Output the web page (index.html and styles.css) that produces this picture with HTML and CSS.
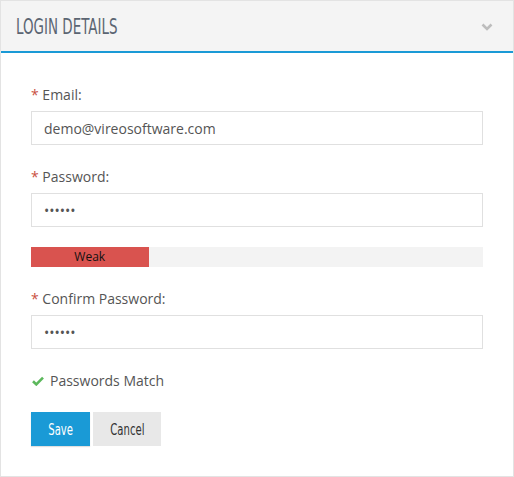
FILE: index.html
```html
<!DOCTYPE html>
<html lang="en">
<head>
  <meta charset="UTF-8">
  <title>Login Details</title>
  <meta name="viewport" content="width=device-width, initial-scale=1.0">
  <link rel="stylesheet" href="styles.css">
</head>
<body>

  <div class="panel">
    <div class="panel-heading">
      <h3 class="panel-title"><span>LOGIN DETAILS</span></h3>
      <svg class="chevron" width="12" height="8" viewBox="0 0 12 8">
        <path d="M1.5 1.5 L6 6 L10.5 1.5" fill="none" stroke="#bdbdbd" stroke-width="2.6"/>
      </svg>
    </div>

    <form class="panel-body">
      <div class="form-group">
        <label for="email"><span class="req">*</span> Email:</label>
        <input type="text" id="email" value="demo@vireosoftware.com">
      </div>

      <div class="form-group">
        <label for="password"><span class="req">*</span> Password:</label>
        <input type="password" id="password" value="123456">
      </div>

      <!-- strength meter -->
      <div class="strength">
        <div class="strength-bar" style="width: 26%">Weak</div>
      </div>

      <div class="form-group">
        <label for="confirm"><span class="req">*</span> Confirm Password:</label>
        <input type="password" id="confirm" value="123456">
      </div>

      <p class="match">
        <svg width="12" height="10" viewBox="0 0 12 10">
          <path d="M1 5.2 L4.3 8.4 L11 1.6" fill="none" stroke="#5cb85c" stroke-width="2.6"/>
        </svg>
        Passwords Match
      </p>

      <div class="actions">
        <button type="button" class="btn btn-primary"><span>Save</span></button>
        <button type="button" class="btn btn-default"><span>Cancel</span></button>
      </div>
    </form>
  </div>

</body>
</html>
```

FILE: styles.css
```css
body {
  margin: 0;
  font-family: "Open Sans", "Liberation Sans", sans-serif;
  font-size: 14px;
  color: #555;
  background: #fff;
}

/* panel */
.panel {
  box-sizing: border-box;
  width: 514px;
  height: 477px;
  border: 1px solid #e3e3e3;
}
.panel-heading {
  display: flex;
  align-items: center;
  justify-content: space-between;
  height: 50px;
  padding: 0 20px 0 15px;
  background: #f4f4f4;
  border-bottom: 2px solid #1a9ad6;
}
.panel-title {
  margin: 0;
  font-family: "Liberation Sans Narrow", "DejaVu Sans Condensed", sans-serif;
  font-weight: normal;
  font-size: 22px;
  color: #5b6572;
}
.panel-title span {
  display: inline-block;
  transform: scaleX(0.68);
  transform-origin: left center;
}
.chevron { margin-top: 2px; }

.panel-body {
  padding: 32px 30px 0 30px;
  margin: 0;
}

/* fields */
.form-group { margin-bottom: 22px; }
label {
  display: block;
  line-height: 20px;
  margin-bottom: 6px;
}
.req { color: #c9503f; }
input {
  display: block;
  box-sizing: border-box;
  width: 100%;
  height: 34px;
  padding: 0 12px;
  border: 1px solid #e0e0e0;
  border-radius: 0;
  font-family: inherit;
  font-size: 14px;
  color: #555;
  outline: none;
}

/* strength meter */
.strength {
  height: 20px;
  margin: -2px 0 22px;
  background: #f3f3f3;
}
.strength-bar {
  height: 20px;
  line-height: 20px;
  text-align: center;
  font-size: 12px;
  color: #111;
  background: #d9534f;
}

.match {
  display: flex;
  align-items: center;
  gap: 6px;
  margin: 0 0 21px 1px;
  line-height: 20px;
}

/* buttons */
.actions { display: flex; gap: 3px; }
.btn {
  height: 34px;
  padding: 0;
  border: none;
  border-radius: 0;
  font-family: "Liberation Sans Narrow", "DejaVu Sans Condensed", sans-serif;
  font-size: 16px;
  cursor: pointer;
}
.btn span { display: inline-block; transform: scaleX(0.7); }
.btn-primary {
  width: 59px;
  color: #fff;
  background: #1a9ad6;
  box-shadow: 0 1px 1px rgba(0,0,0,0.12);
}
.btn-default {
  width: 68px;
  color: #333;
  background: #e8e8e8;
}
```
